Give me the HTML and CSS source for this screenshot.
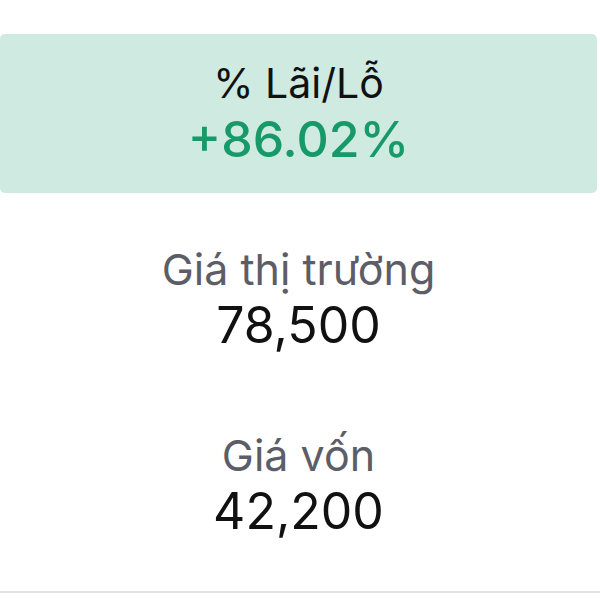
FILE: index.html
```html
<!DOCTYPE html>
<html lang="vi">

<head>
    <meta charset="UTF-8">
    <meta name="viewport" content="width=device-width, initial-scale=1.0">
    <title>Lãi/Lỗ</title>
    <link rel="stylesheet" href="styles.css">
</head>

<body>

    <div class="stats">
        <div class="stat stat-profit">
            <div class="stat-label">% Lãi/Lỗ</div>
            <div class="stat-value up">+86.02%</div>
        </div>

        <div class="stat">
            <div class="stat-label muted">Giá thị trường</div>
            <div class="stat-value">78,500</div>
        </div>

        <div class="stat">
            <div class="stat-label muted">Giá vốn</div>
            <div class="stat-value">42,200</div>
        </div>
    </div>

</body>

</html>
```

FILE: styles.css
```css
body {
    font-family: Inter, "Noto Sans", sans-serif;
    background-color: #fff;
    color: #111;
    margin: 0;
    padding: 0;
}

.stats {
    display: flex;
    flex-direction: column;
    gap: 27px;
    padding: 34px 3px 26px 0;
    border-bottom: 2px solid #e2e2e4;
}

.stat {
    height: 159px;
    display: flex;
    flex-direction: column;
    align-items: center;
    justify-content: center;
    gap: 5px;
    border-radius: 5px;
}

.stat-profit {
    background-color: #cfeae0;
}

.stat-label {
    font-size: 41px;
    line-height: 46px;
    color: #111;
}

.stat-label.muted {
    font-size: 43px;
    color: #5c5d66;
}

.stat-value {
    font-size: 50px;
    line-height: 56px;
    color: #111;
}

.stat-value.up {
    font-weight: 500;
    color: #17996a;
}
```
